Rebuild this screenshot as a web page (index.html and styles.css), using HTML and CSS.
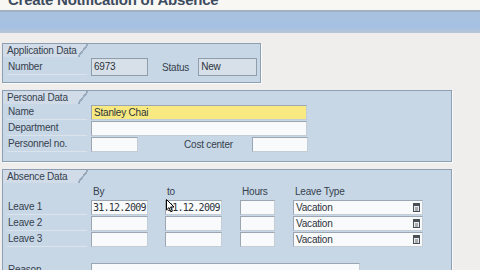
FILE: index.html
```html
<!DOCTYPE html>
<html lang="en">
<head>
    <meta charset="UTF-8">
    <title>Create Notification of Absence</title>
    <link rel="stylesheet" href="styles.css">
</head>
<body>

    <!-- Screen title (cut at the top) -->
    <div class="title"><h1>Create Notification of Absence</h1></div>

    <!-- Application toolbar -->
    <div class="toolbar"></div>

    <div class="content">

        <!-- Application Data -->
        <section class="group group-app">
            <div class="tab">Application Data</div>
            <div class="rows">
                <div class="row row-tall">
                    <span class="lbl">Number</span>
                    <div class="field ro w-num">6973</div>
                    <span class="lbl-inline lbl-status">Status</span>
                    <div class="field ro w-status">New</div>
                </div>
            </div>
        </section>

        <!-- Personal Data -->
        <section class="group group-wide">
            <div class="tab">Personal Data</div>
            <div class="rows rows-personal">
                <div class="row">
                    <span class="lbl">Name</span>
                    <div class="field req w-name">Stanley Chai</div>
                </div>
                <div class="row">
                    <span class="lbl">Department</span>
                    <div class="field w-name"></div>
                </div>
                <div class="row">
                    <span class="lbl">Personnel no.</span>
                    <div class="field w-pers"></div>
                    <span class="lbl-inline lbl-cost">Cost center</span>
                    <div class="field w-cost"></div>
                </div>
            </div>
        </section>

        <!-- Absence Data -->
        <section class="group group-wide">
            <div class="tab">Absence Data</div>
            <div class="rows">
                <div class="row head">
                    <span class="lbl no-line"></span>
                    <span class="c-by">By</span>
                    <span class="c-to">to</span>
                    <span class="c-hr">Hours</span>
                    <span class="c-type">Leave Type</span>
                </div>
                <div class="row">
                    <span class="lbl">Leave 1</span>
                    <div class="field c-by date">31.12.2009</div>
                    <div class="field c-to date cursor-host">31.12.2009
                        <svg class="cursor" width="9" height="14" viewBox="0 0 9 14"><path d="M0.5 0.5 L0.5 11 L3 8.6 L4.8 12.8 L6.4 12.1 L4.6 8 L8 8 Z" fill="#fff" stroke="#000" stroke-width="1"/></svg>
                    </div>
                    <div class="field c-hr"></div>
                    <div class="field c-type"><span>Vacation</span><svg class="f4" width="7" height="9" viewBox="0 0 7 9"><rect x="0.5" y="0.5" width="6" height="8" fill="#e9ecef" stroke="#4a4f55"/><rect x="1" y="1" width="5" height="2" fill="#4a4f55"/><path d="M2 5h3M2 7h3" stroke="#6b7178"/></svg></div>
                </div>
                <div class="row">
                    <span class="lbl">Leave 2</span>
                    <div class="field c-by"></div>
                    <div class="field c-to"></div>
                    <div class="field c-hr"></div>
                    <div class="field c-type"><span>Vacation</span><svg class="f4" width="7" height="9" viewBox="0 0 7 9"><rect x="0.5" y="0.5" width="6" height="8" fill="#e9ecef" stroke="#4a4f55"/><rect x="1" y="1" width="5" height="2" fill="#4a4f55"/><path d="M2 5h3M2 7h3" stroke="#6b7178"/></svg></div>
                </div>
                <div class="row">
                    <span class="lbl">Leave 3</span>
                    <div class="field c-by"></div>
                    <div class="field c-to"></div>
                    <div class="field c-hr"></div>
                    <div class="field c-type"><span>Vacation</span><svg class="f4" width="7" height="9" viewBox="0 0 7 9"><rect x="0.5" y="0.5" width="6" height="8" fill="#e9ecef" stroke="#4a4f55"/><rect x="1" y="1" width="5" height="2" fill="#4a4f55"/><path d="M2 5h3M2 7h3" stroke="#6b7178"/></svg></div>
                </div>
                <div class="row row-reason">
                    <span class="lbl no-line">Reason</span>
                    <div class="field w-reason"></div>
                </div>
            </div>
        </section>

    </div>

</body>
</html>
```

FILE: styles.css
```css
/* Reset */
* {
    margin: 0;
    padding: 0;
    box-sizing: border-box;
}

body {
    width: 480px;
    height: 270px;
    overflow: hidden;
    background: #efeeec;
    font-family: "Liberation Sans", Arial, sans-serif;
    font-size: 10px;
    letter-spacing: -0.2px;
    color: #36414d;
}

/* Title */
.title {
    height: 10px;
    overflow: hidden;
    background: #f8f7f4;
    padding-left: 8px;
}

.title h1 {
    font-size: 15px;
    line-height: 15px;
    font-weight: bold;
    letter-spacing: -0.25px;
    color: #3d4c5f;
    margin-top: -8px;
    white-space: nowrap;
}

/* Toolbar */
.toolbar {
    height: 23px;
    border-top: 2px solid #9fb0c3;
    background: linear-gradient(#a9c1df, #a5c0e2 70%, #b7c6d7);
}

/* Content */
.content {
    padding: 10px 0 0 2px;
    display: flex;
    flex-direction: column;
    gap: 7px;
}

/* Group boxes */
.group {
    border: 1px solid #8d9fb2;
    background: #c7d7e6;
    box-shadow: 1px 1px 0 #fbfbfb;
}

.group-app { width: 259px; }
.group-wide { width: 450px; }

.tab {
    position: relative;
    width: 75px;
    height: 13px;
    line-height: 13px;
    padding-left: 4px;
    background: #d1dce8;
    white-space: nowrap;
    color: #34404c;
}

.tab::after {
    content: "";
    position: absolute;
    top: 0;
    right: -10px;
    width: 10px;
    height: 13px;
    background: linear-gradient(to bottom right, #d1dce8 0 44%, #9aabbd 44% 56%, transparent 56%);
}

/* Rows */
.rows {
    padding: 1px 0 6px 4px;
    display: flex;
    flex-direction: column;
    gap: 1px;
}

.rows-personal { padding-bottom: 9px; }

.row {
    display: flex;
    align-items: center;
    height: 15px;
}

.row-tall { height: 18px; }

.lbl {
    width: 80px;
    margin-right: 4px;
    height: 15px;
    line-height: 14px;
    padding-left: 1px;
    border-bottom: 1px solid #dbe3ec;
    white-space: nowrap;
}

.no-line { border-bottom: none; }

.lbl-inline { white-space: nowrap; }
.lbl-status { margin: 0 9px 0 14px; }
.lbl-cost { margin: 0 19px 0 46px; }

/* Fields */
.field {
    height: 15px;
    line-height: 13px;
    padding-left: 2px;
    border: 1px solid #9ba6b2;
    border-bottom-color: #c4ccd5;
    border-right-color: #c4ccd5;
    background: #f9fafb;
    color: #2c333b;
    white-space: nowrap;
    overflow: hidden;
}

.ro {
    height: 18px;
    line-height: 16px;
    background: #d7e0e9;
    border-color: #909daa;
}

.req { background: #f8ea80; }

.w-num { width: 57px; }
.w-status { width: 59px; }
.w-name { width: 216px; }
.w-pers { width: 47px; }
.w-cost { width: 56px; }
.w-reason { width: 269px; }

/* Absence columns */
.c-by { width: 57px; margin-right: 17px; }
.c-to { width: 57px; margin-right: 18px; }
.c-hr { width: 35px; margin-right: 18px; }
.c-type { width: 130px; }

.head span { padding-left: 2px; line-height: 15px; }

.c-type.field {
    display: flex;
    align-items: center;
    justify-content: space-between;
    padding-right: 2px;
}

.date {
    font-family: "DejaVu Sans Mono", monospace;
    font-size: 10px;
    letter-spacing: -0.75px;
    padding-left: 1px;
}

.cursor-host {
    position: relative;
    overflow: visible;
}

.cursor {
    position: absolute;
    left: 0;
    top: -2px;
}

.row-reason { margin-top: 15px; }
```
